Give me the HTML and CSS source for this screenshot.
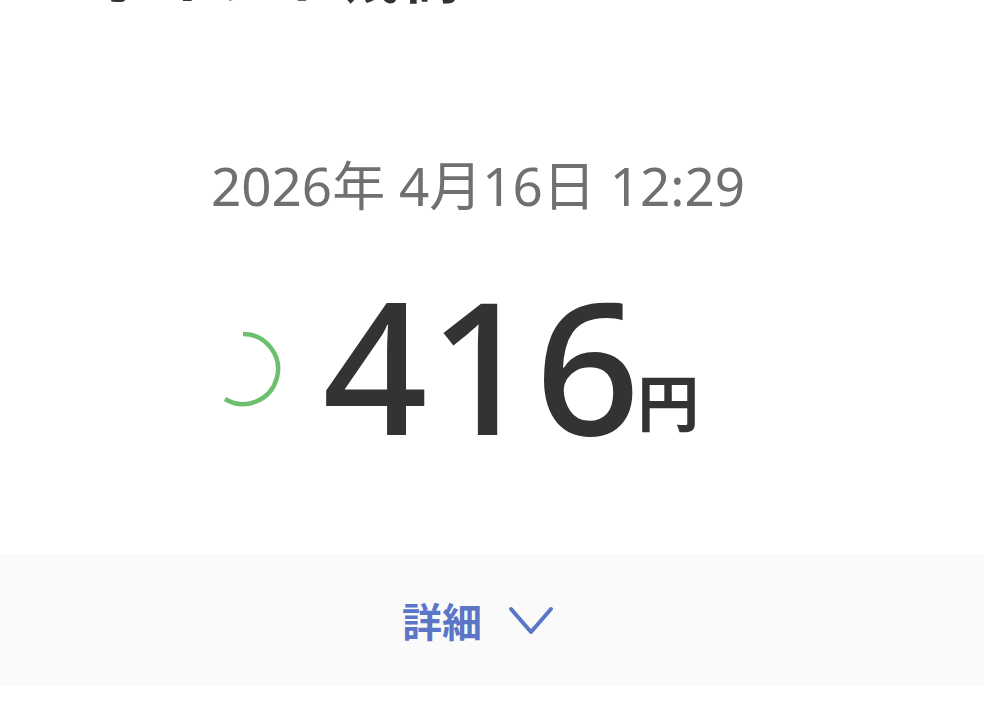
FILE: index.html
```html
<!DOCTYPE html>
<html lang="ja">
<head>
    <meta charset="UTF-8">
    <title>残高</title>
    <link rel="stylesheet" href="styles.css">
</head>
<body>
<div class="page">
    <h1 class="title">Hポイント残高</h1>

    <div class="balance">
        <p class="date">2026年 4月16日 12:29</p>

        <div class="amount">
            <svg class="spinner" width="76" height="76" viewBox="0 0 76 76">
                <path d="M38 3 A35 35 0 1 1 20 68" fill="none" stroke="#6cbf6c" stroke-width="4.5"/>
            </svg>
            <span class="value">416</span>
            <span class="unit">円</span>
        </div>
    </div>

    <div class="detail">
        <span class="detail-label">詳細</span>
        <svg class="chevron" width="46" height="32" viewBox="0 0 46 32">
            <path d="M3 4 L23 27 L43 4" fill="none" stroke="#5b76c6" stroke-width="4" stroke-linecap="round" stroke-linejoin="round"/>
        </svg>
    </div>
</div>
</body>
</html>
```

FILE: styles.css
```css
* {
    margin: 0;
    padding: 0;
}

body {
    background: #fff;
    font-family: "Noto Sans CJK JP", "Noto Sans", sans-serif;
    overflow: hidden;
}

.page {
    width: 984px;
    height: 711px;
    overflow: hidden;
}

.title {
    margin-top: -60px;
    padding-left: 46px;
    height: 70px;
    font-size: 56px;
    line-height: 68px;
    font-weight: 700;
    color: #333;
    letter-spacing: 6px;
    white-space: nowrap;
}

.balance {
    padding-top: 141px;
    height: 403px;
}

.date {
    text-align: center;
    padding-right: 28px;
    font-family: "Noto Sans", "Noto Sans CJK JP", sans-serif;
    font-size: 53px;
    line-height: 70px;
    color: #707070;
    font-weight: 400;
}

.amount {
    display: flex;
    align-items: center;
    justify-content: center;
    padding-right: 80px;
    margin-top: 48px;
    height: 190px;
}

.spinner {
    margin-right: 42px;
    margin-top: 10px;
}

.value {
    font-family: "Noto Sans", sans-serif;
    font-size: 184px;
    line-height: 1;
    font-weight: 500;
    color: #333;
    letter-spacing: 1px;
}

.unit {
    align-self: flex-end;
    margin-left: -4px;
    margin-bottom: 28px;
    font-size: 62px;
    line-height: 1;
    font-weight: 700;
    color: #333;
}

.detail {
    height: 132px;
    background: #fafafa;
    display: flex;
    align-items: center;
    justify-content: center;
    padding-right: 28px;
}

.detail-label {
    font-size: 40px;
    font-weight: 700;
    color: #5b76c6;
    margin-right: 26px;
}

.chevron {
    margin-top: 2px;
}
```
